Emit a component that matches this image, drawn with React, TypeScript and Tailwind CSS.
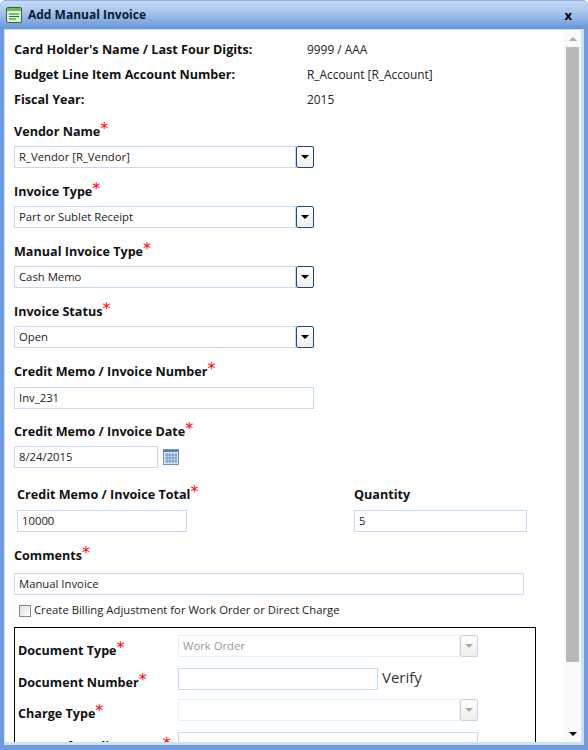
import React from 'react';

const labelFont = "font-['Open_Sans','Noto_Sans',sans-serif]";

function Req() {
    return <span className="text-[#ff0000] text-[16px] leading-[12px] font-normal font-['DejaVu_Sans',sans-serif] relative top-[-3px]">*</span>;
}

function FieldLabel({ children, required = true, className = '' }: { children: React.ReactNode; required?: boolean; className?: string }) {
    return (
        <div className={`h-[20px] flex items-center text-[12.6px] font-bold text-[#111] whitespace-nowrap ${className}`}>
            <span>{children}</span>
            {required && <Req />}
        </div>
    );
}

function Arrow({ disabled }: { disabled?: boolean }) {
    return <span className={`block w-0 h-0 border-x-[4px] border-x-transparent border-t-[4px] ${disabled ? 'border-t-[#aaa]' : 'border-t-black'}`} />;
}

function Select({ value, disabled, className = 'w-[300px]' }: { value?: string; disabled?: boolean; className?: string }) {
    return (
        <div className={`h-[22px] flex ${className}`}>
            <div className={`flex-1 border flex items-center pl-1 text-[11.3px] ${disabled ? 'border-[#e8eff8] text-[#999]' : 'border-[#c3d9f5] text-[#222]'}`}>{value}</div>
            <div className={`w-[18px] border rounded-[2px] flex items-center justify-center bg-gradient-to-b from-white to-[#f0eeea] ${disabled ? 'border-[#c8d4e6]' : 'border-[#1c4a80]'}`}>
                <Arrow disabled={disabled} />
            </div>
        </div>
    );
}

function Input({ value, className = 'w-[300px]' }: { value?: string; className?: string }) {
    return <div className={`h-[22px] border border-[#c3d9f5] flex items-center pl-1 text-[11.3px] text-[#222] ${className}`}>{value}</div>;
}

function InfoRow({ label, value, className = '' }: { label: string; value: string; className?: string }) {
    return (
        <div className={`flex items-center h-[20px] ${className}`}>
            <div className="w-[293px] text-[12.6px] font-bold text-[#111] whitespace-nowrap">{label}</div>
            <div className="text-[11.9px] text-[#222]">{value}</div>
        </div>
    );
}

function CalendarIcon() {
    return (
        <svg width="16" height="16" viewBox="0 0 16 16" className="ml-[5px] mt-[-1px]">
            <rect x="0.5" y="0.5" width="15" height="15" fill="#d6e3f5" stroke="#6f92c4" />
            <rect x="1" y="1" width="14" height="2" fill="#5b7fb5" />
            <path d="M4 4v10M7 4v10M10 4v10M13 4v10M2 6h12M2 9h12M2 12h12" stroke="#6f92c4" strokeWidth="1" fill="none" />
        </svg>
    );
}

export default function App() {
    return (
        <div className={`w-[588px] h-[750px] overflow-hidden flex flex-col rounded-t-[6px] bg-[#6e9bdc] ${labelFont}`}>
            <div className="h-[29px] shrink-0 flex items-center pl-[6px] pr-[16px] bg-gradient-to-b from-[#c9dcf6] via-[#9dbeea] to-[#6596d8] border-t border-[#8fb0e0] rounded-t-[6px]">
                <svg width="16" height="16" viewBox="0 0 16 16" className="mr-[6px]">
                    <rect x="0.5" y="0.5" width="15" height="15" rx="1.5" fill="#dff3d0" stroke="#2f6b2f" />
                    <rect x="1" y="1" width="14" height="3" fill="#6dbb4a" />
                    <path d="M3 7h10M3 9.5h10M3 12h7" stroke="#1d7a3a" strokeWidth="1" />
                </svg>
                <span className="flex-1 text-[12px] font-bold text-[#0b1a33]">Add Manual Invoice</span>
                <span className="text-[13px] font-bold text-black leading-none">x</span>
            </div>
            <div className="flex-1 min-h-0 mx-[4px] mb-[5px] bg-white border-[3px] border-t-[1px] border-l-[1px] border-[#cfe0f5] flex">
                <div className="flex-1 min-w-0 overflow-hidden pl-[9px] pt-[10px]">
                    <InfoRow label="Card Holder's Name / Last Four Digits:" value="9999 / AAA" />
                    <InfoRow label="Budget Line Item Account Number:" value="R_Account [R_Account]" className="mt-[5px]" />
                    <InfoRow label="Fiscal Year:" value="2015" className="mt-[5px]" />

                    <FieldLabel className="mt-[12px]">Vendor Name</FieldLabel>
                    <Select value="R_Vendor [R_Vendor]" className="w-[300px] mt-[4px]" />
                    <FieldLabel className="mt-[14px]">Invoice Type</FieldLabel>
                    <Select value="Part or Sublet Receipt" className="w-[300px] mt-[4px]" />
                    <FieldLabel className="mt-[14px]">Manual Invoice Type</FieldLabel>
                    <Select value="Cash Memo" className="w-[300px] mt-[4px]" />
                    <FieldLabel className="mt-[14px]">Invoice Status</FieldLabel>
                    <Select value="Open" className="w-[300px] mt-[4px]" />
                    <FieldLabel className="mt-[14px]">Credit Memo / Invoice Number</FieldLabel>
                    <Input value="Inv_231" className="w-[300px] mt-[5px]" />
                    <FieldLabel className="mt-[13px]">Credit Memo / Invoice Date</FieldLabel>
                    <div className="flex items-center mt-[4px]">
                        <Input value="8/24/2015" className="w-[144px]" />
                        <CalendarIcon />
                    </div>

                    <div className="flex mt-[17px] pl-[3px]">
                        <div className="w-[337px]">
                            <FieldLabel>Credit Memo / Invoice Total</FieldLabel>
                            <Input value="10000" className="w-[170px] mt-[5px]" />
                        </div>
                        <div>
                            <FieldLabel required={false}>Quantity</FieldLabel>
                            <Input value="5" className="w-[173px] mt-[5px]" />
                        </div>
                    </div>

                    <FieldLabel className="mt-[14px]">Comments</FieldLabel>
                    <Input value="Manual Invoice" className="w-[510px] mt-[7px]" />
                    <div className="flex items-center mt-[7px] ml-[5px] h-[17px]">
                        <span className="w-[12px] h-[12px] border border-[#888] bg-gradient-to-br from-[#ddd] to-white mr-[3px]" />
                        <span className="text-[11.3px] text-[#222]">Create Billing Adjustment for Work Order or Direct Charge</span>
                    </div>

                    <div className="w-[522px] h-[200px] border border-black mt-[8px] pl-[3px] pt-[7px]">
                        <div className="flex items-center h-[22px]">
                            <FieldLabel className="w-[160px] mt-[10px]">Document Type</FieldLabel>
                            <Select value="Work Order" disabled className="w-[300px]" />
                        </div>
                        <div className="flex items-center h-[22px] mt-[11px]">
                            <FieldLabel className="w-[160px] mt-[8px]">Document Number</FieldLabel>
                            <Input className="w-[200px]" />
                            <span className="ml-[4px] mb-[4px] text-[15px] text-[#333]">Verify</span>
                        </div>
                        <div className="flex items-center h-[22px] mt-[9px]">
                            <FieldLabel className="w-[160px] mt-[8px]">Charge Type</FieldLabel>
                            <Select disabled className="w-[300px]" />
                        </div>
                        <div className="flex items-center h-[22px] mt-[11px]">
                            <FieldLabel className="w-[160px] mt-[8px]">Reason for Adjustment</FieldLabel>
                            <Input className="w-[300px]" />
                        </div>
                    </div>
                </div>
                <div className="w-[17px] shrink-0 flex flex-col items-center bg-[#fafafa]">
                    <div className="h-[17px] w-full flex items-center justify-center"><span className="block w-0 h-0 border-x-[4px] border-x-transparent border-b-[4px] border-b-[#aaa]" /></div>
                    <div className="w-[13px] h-[615px] bg-[#b8b8b8] border border-[#b0c0a8]" />
                    <div className="flex-1" />
                    <div className="h-[17px] w-full flex items-center justify-center"><Arrow /></div>
                </div>
            </div>
        </div>
    );
}
